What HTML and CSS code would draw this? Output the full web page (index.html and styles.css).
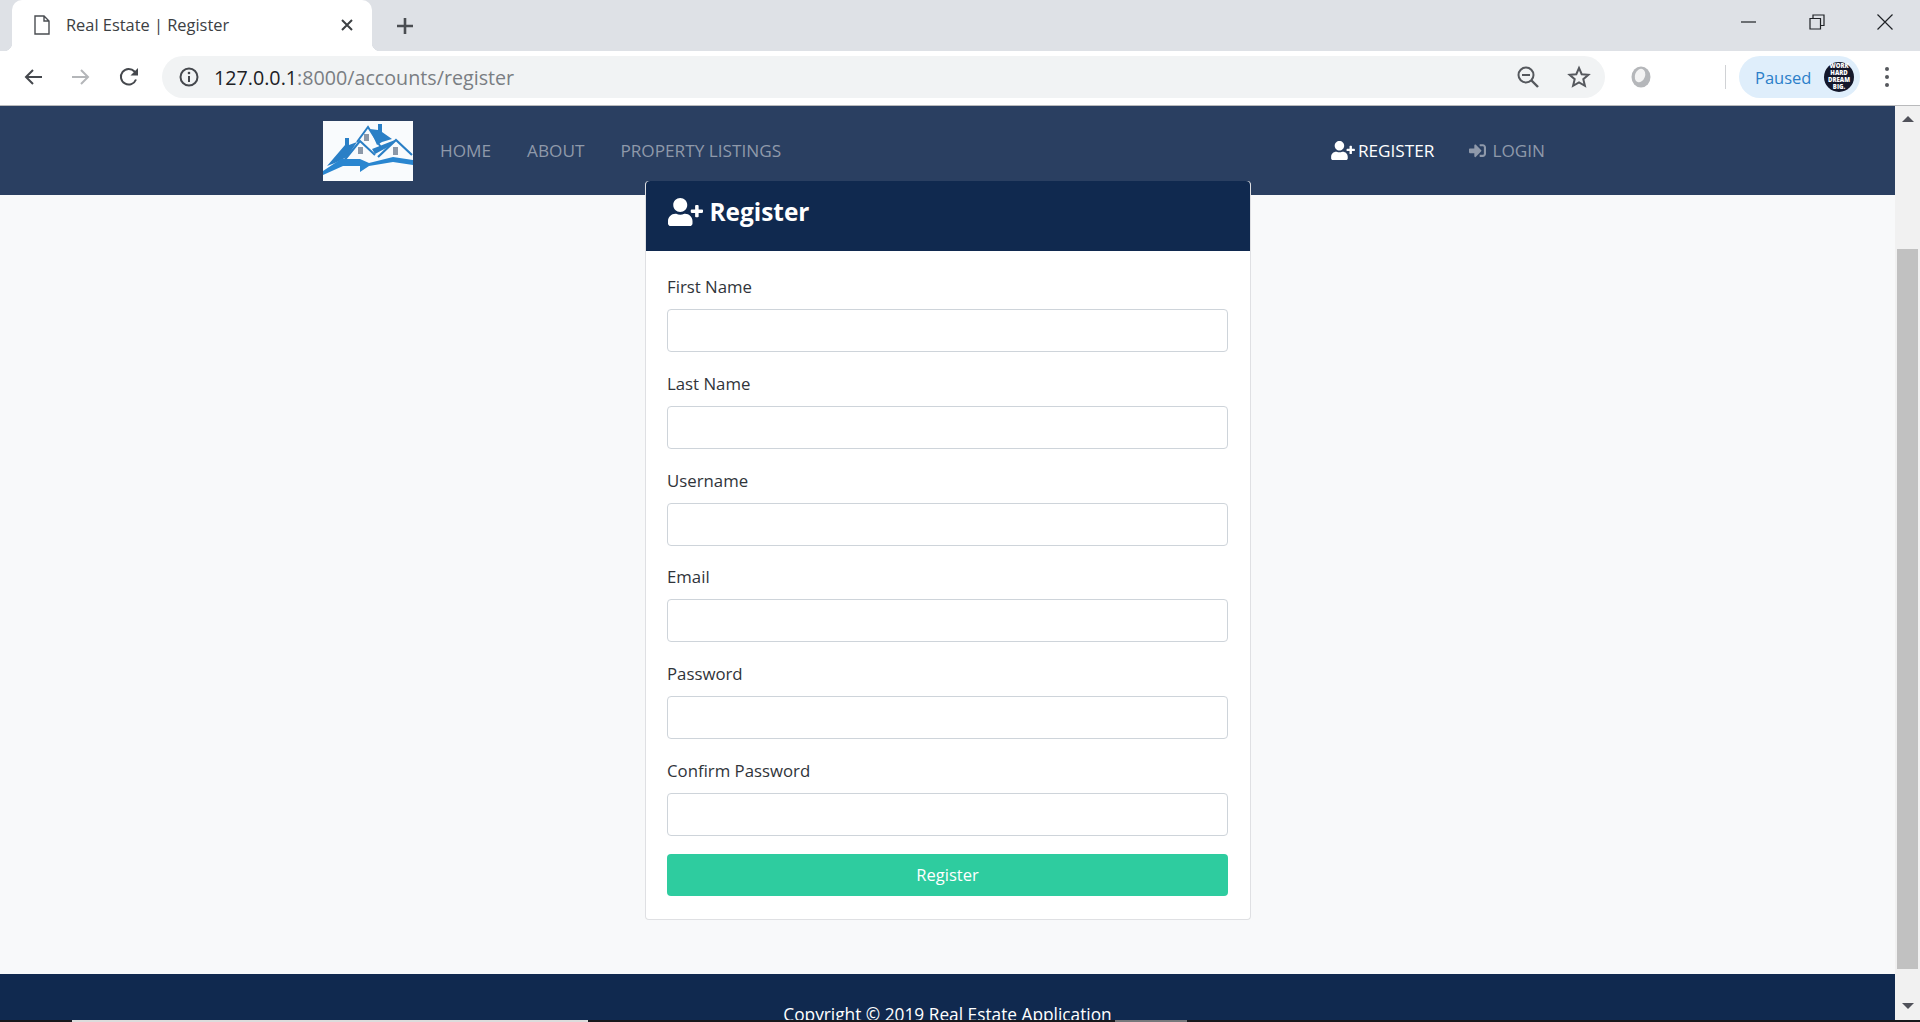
FILE: index.html
```html
<!DOCTYPE html>
<html lang="en">
<head>
  <meta charset="UTF-8" />
  <title>Real Estate | Register</title>
  <link rel="stylesheet" href="styles.css">
</head>
<body>
  <div class="tabstrip">
    <div class="tab">
      <svg class="tab-doc" width="16" height="20" viewBox="0 0 16 20"><path d="M1 1h9l5 5v13H1z M10 1v5h5" fill="none" stroke="#4a4d52" stroke-width="1.4"/></svg>
      <span class="tab-title">Real Estate | Register</span>
      <svg class="tab-close" width="14" height="14" viewBox="0 0 14 14"><path d="M2 2l10 10M12 2L2 12" stroke="#3c4043" stroke-width="2"/></svg>
    </div>
    <svg class="new-tab" width="20" height="20" viewBox="0 0 20 20"><path d="M10 2v16M2 10h16" stroke="#4a4d52" stroke-width="2.6"/></svg>
    <div class="win-controls">
      <svg width="16" height="16" viewBox="0 0 16 16"><path d="M0 8h15" stroke="#1f2226" stroke-width="1.2"/></svg>
      <svg width="16" height="16" viewBox="0 0 16 16"><path d="M1 4.500h10.500V15H1z M4 4.500V1h11v10.500h-3.500" fill="none" stroke="#1f2226" stroke-width="1.2"/></svg>
      <svg width="16" height="16" viewBox="0 0 16 16"><path d="M0.500 0.500l15 15M15.500 0.500l-15 15" stroke="#1f2226" stroke-width="1.2"/></svg>
    </div>
  </div>

  <div class="toolbar">
    <div class="tool-btn">
      <svg width="20" height="18" viewBox="0 0 20 18"><path d="M19 9H3M10 2L3 9l7 7" fill="none" stroke="#45484d" stroke-width="2"/></svg>
    </div>
    <div class="tool-btn">
      <svg width="20" height="18" viewBox="0 0 20 18"><path d="M1 9h16M10 2l7 7-7 7" fill="none" stroke="#b4b6b9" stroke-width="2"/></svg>
    </div>
    <div class="tool-btn">
      <svg width="22" height="22" viewBox="0 0 22 22"><path d="M18 13.500A7.800 7.800 0 1 1 16.500 5.500L19 8" fill="none" stroke="#45484d" stroke-width="2"/><path d="M20 2v7.500h-7.500z" fill="#45484d"/></svg>
    </div>
    <div class="omnibox">
      <svg width="22" height="22" viewBox="0 0 22 22"><circle cx="11" cy="11" r="8.500" fill="none" stroke="#45484d" stroke-width="2"/><path d="M11 10v6" stroke="#45484d" stroke-width="2"/><circle cx="11" cy="7" r="1.300" fill="#45484d"/></svg>
      <span class="url"><span class="url-host">127.0.0.1</span>:8000/accounts/register</span>
      <div class="omni-actions">
        <svg width="24" height="24" viewBox="0 0 24 24"><circle cx="10" cy="10" r="7.500" fill="none" stroke="#55585d" stroke-width="2"/><path d="M15.500 15.500L22 22" stroke="#55585d" stroke-width="2.400"/><path d="M6 10h8" stroke="#55585d" stroke-width="2"/></svg>
        <svg width="24" height="24" viewBox="0 0 24 24"><path d="M12 3l2.700 6.200 6.700.6-5.100 4.400 1.600 6.600L12 17.300l-5.900 3.500 1.600-6.600-5.100-4.400 6.700-.6z" fill="none" stroke="#55585d" stroke-width="2"/></svg>
      </div>
    </div>
    <svg class="ext-icon" width="24" height="24" viewBox="0 0 24 24"><ellipse cx="12" cy="12" rx="9.500" ry="10.500" fill="#b5b7ba"/><ellipse cx="11" cy="10.500" rx="5" ry="7" transform="rotate(20 11 10.500)" fill="#f3f3f3"/></svg>
    <div class="tool-sep"></div>
    <div class="paused-pill">
      <span class="paused-text">Paused</span>
      <div class="avatar"><span>WORK</span><span>HARD</span><span>DREAM</span><span>BIG.</span></div>
    </div>
    <div class="menu-dots"><i></i><i></i><i></i></div>
  </div>

  <div class="viewport">
    <div class="page">
      <nav class="navbar">
        <svg class="logo" width="90" height="60" viewBox="0 0 90 60">
          <rect width="90" height="60" fill="#f9fbfd"/>
          <path d="M4 45L22 24V17h4v7l8-3-10 15-12 6z" fill="#2a7fc6"/>
          <path d="M47 8l8 1V3h4v8l10 7-10 3-5 3z" fill="#2a7fc6"/>
          <path d="M49 28l23-9-7 7-13 7z" fill="#2a7fc6"/>
          <path d="M34 21L45 6l14 22" fill="none" stroke="#2a7fc6" stroke-width="2"/>
          <path d="M20 41L37 20l15 14" fill="none" stroke="#2a7fc6" stroke-width="2"/>
          <path d="M55 36l18-17 16 15" fill="none" stroke="#2a7fc6" stroke-width="2.200"/>
          <path d="M0 50L18 38H37l9 4 24-6 20 3v5l-20-3-24 4-9 6V45H20L0 54z" fill="#2a86d0"/>
          <path d="M41 13h5v7h-5zM35 26h5v7h-5zM70 26h5v8h-5z" fill="#8c98a8"/>
        </svg>
        <a class="nav-link nav-home">HOME</a>
        <a class="nav-link">ABOUT</a>
        <a class="nav-link">PROPERTY LISTINGS</a>
        <div class="nav-right">
          <a class="nav-link nav-active">
            <svg width="24" height="19" viewBox="0 0 640 512" fill="#fff"><path d="M624 208h-64v-64c0-8.800-7.200-16-16-16h-32c-8.800 0-16 7.200-16 16v64h-64c-8.800 0-16 7.200-16 16v32c0 8.800 7.200 16 16 16h64v64c0 8.800 7.200 16 16 16h32c8.800 0 16-7.200 16-16v-64h64c8.800 0 16-7.200 16-16v-32c0-8.800-7.200-16-16-16zm-400 48c70.700 0 128-57.300 128-128S294.700 0 224 0 96 57.300 96 128s57.300 128 128 128zm89.600 32h-16.700c-22.200 10.200-46.900 16-72.900 16s-50.600-5.800-72.900-16h-16.700C60.200 288 0 348.200 0 422.400V464c0 26.500 21.500 48 48 48h352c26.500 0 48-21.500 48-48v-41.600c0-74.200-60.200-134.400-134.400-134.400z"/></svg>
            REGISTER
          </a>
          <a class="nav-link">
            <svg width="19" height="17" viewBox="0 0 512 512" fill="#8f99aa"><path d="M416 448h-84c-6.600 0-12-5.400-12-12v-40c0-6.600 5.400-12 12-12h84c17.700 0 32-14.300 32-32V160c0-17.700-14.300-32-32-32h-84c-6.600 0-12-5.400-12-12V76c0-6.600 5.400-12 12-12h84c53 0 96 43 96 96v192c0 53-43 96-96 96zm-47-201L201 79c-15-15-41-4.500-41 17v96H24c-13.300 0-24 10.700-24 24v96c0 13.300 10.700 24 24 24h136v96c0 21.500 26 32 41 17l168-168c9.300-9.400 9.300-24.600 0-34z"/></svg>
            LOGIN
          </a>
        </div>
      </nav>

      <main class="card">
        <div class="card-header">
          <svg width="35" height="28" viewBox="0 0 640 512" fill="#fff"><path d="M624 208h-64v-64c0-8.800-7.200-16-16-16h-32c-8.800 0-16 7.200-16 16v64h-64c-8.800 0-16 7.200-16 16v32c0 8.800 7.200 16 16 16h64v64c0 8.800 7.200 16 16 16h32c8.800 0 16-7.200 16-16v-64h64c8.800 0 16-7.200 16-16v-32c0-8.800-7.200-16-16-16zm-400 48c70.700 0 128-57.300 128-128S294.700 0 224 0 96 57.300 96 128s57.300 128 128 128zm89.600 32h-16.700c-22.200 10.200-46.900 16-72.900 16s-50.600-5.800-72.900-16h-16.700C60.200 288 0 348.200 0 422.400V464c0 26.500 21.500 48 48 48h352c26.500 0 48-21.500 48-48v-41.600c0-74.200-60.200-134.400-134.400-134.400z"/></svg>
          <h4>Register</h4>
        </div>
        <form class="card-body">
          <div class="form-group"><label>First Name</label><input type="text"></div>
          <div class="form-group"><label>Last Name</label><input type="text"></div>
          <div class="form-group"><label>Username</label><input type="text"></div>
          <div class="form-group"><label>Email</label><input type="email"></div>
          <div class="form-group"><label>Password</label><input type="password"></div>
          <div class="form-group"><label>Confirm Password</label><input type="password"></div>
          <button type="button" class="btn-register">Register</button>
        </form>
      </main>

      <footer class="footer">Copyright © 2019 Real Estate Application</footer>
    </div>

    <div class="scrollbar">
      <div class="scroll-btn"><span class="arrow-up"></span></div>
      <div class="scroll-thumb"></div>
      <div class="scroll-btn scroll-btn-down"><span class="arrow-down"></span></div>
    </div>
  </div>

  <div class="taskbar-edge">
    <div class="edge-light"></div>
    <div class="edge-grey"></div>
  </div>
</body>
</html>
```

FILE: styles.css
```css
* {
  box-sizing: border-box;
}
html, body {
  height: 100%;
}
body {
  font-family: "Open Sans", "Noto Sans", Arial, sans-serif;
  display: flex;
  flex-direction: column;
  margin: 0;
  overflow: hidden;
  background-color: #f8f9fa;
  color: #212529;
}

/* browser chrome */
.tabstrip {
  display: flex;
  align-items: center;
  flex: 0 0 51px;
  padding-left: 12px;
  background-color: #dee1e6;
}
.tab {
  position: relative;
  display: flex;
  align-items: center;
  align-self: stretch;
  width: 360px;
  padding: 0 18px 1px 22px;
  background-color: #fff;
  border-radius: 10px 10px 0 0;
}
.tab::before,
.tab::after {
  content: "";
  position: absolute;
  bottom: 0;
  width: 8px;
  height: 8px;
}
.tab::before {
  left: -8px;
  background: radial-gradient(circle at 0 0, transparent 8px, #fff 8.5px);
}
.tab::after {
  right: -8px;
  background: radial-gradient(circle at 100% 0, transparent 8px, #fff 8.5px);
}
.tab-title {
  margin-left: 16px;
  padding-bottom: 2px;
  font-size: 16.4px;
  color: #3c4043;
  white-space: nowrap;
}
.tab-close {
  margin-left: auto;
}
.new-tab {
  margin-left: 23px;
}
.win-controls {
  display: flex;
  gap: 52px;
  margin-left: auto;
  padding: 0 27px 7px 0;
}
.toolbar {
  display: flex;
  align-items: center;
  flex: 0 0 55px;
  padding: 0 0 2px 9px;
  background-color: #fff;
  border-bottom: 1px solid #b9babc;
}
.tool-btn {
  display: flex;
  justify-content: center;
  align-items: center;
  width: 48px;
}
.omnibox {
  display: flex;
  align-items: center;
  width: 1443px;
  height: 42px;
  margin-left: 9px;
  padding: 0 14px 0 16px;
  background-color: #f1f3f4;
  border-radius: 21px;
}
.url {
  margin-left: 14px;
  font-size: 19.7px;
  color: #7a7e83;
  white-space: nowrap;
}
.url-host {
  color: #202124;
}
.omni-actions {
  display: flex;
  gap: 27px;
  margin-left: auto;
}
.ext-icon {
  margin-left: 24px;
}
.tool-sep {
  width: 1px;
  height: 24px;
  margin-left: 72px;
  background-color: #d0d2d5;
}
.paused-pill {
  display: flex;
  align-items: center;
  justify-content: space-between;
  width: 121px;
  height: 42px;
  margin-left: 13px;
  padding: 0 6px 0 16px;
  background-color: #dfeefb;
  border-radius: 21px;
}
.paused-text {
  font-size: 16.5px;
  color: #2b7fc9;
}
.avatar {
  display: flex;
  flex-direction: column;
  align-items: center;
  justify-content: center;
  width: 30px;
  height: 30px;
  border-radius: 50%;
  background-color: #14182b;
  color: #fff;
  font-size: 6px;
  font-weight: 800;
  line-height: 7px;
}
.menu-dots {
  display: flex;
  flex-direction: column;
  gap: 4px;
  margin-left: 25px;
}
.menu-dots i {
  width: 4px;
  height: 4px;
  border-radius: 50%;
  background-color: #55585d;
}

/* page area */
.viewport {
  display: flex;
  flex: 1;
  min-height: 0;
}
.page {
  flex: 1;
  min-width: 0;
  overflow: hidden;
  background-color: #f8f9fa;
}
.navbar {
  display: flex;
  align-items: center;
  height: 89px;
  padding: 0 350px 0 323px;
  background-color: #2a3f61;
}
.logo {
  flex: none;
}
.nav-link {
  display: flex;
  align-items: center;
  gap: 5px;
  margin-left: 36px;
  font-size: 17.2px;
  color: #8f99aa;
  white-space: nowrap;
}
.nav-home {
  margin-left: 27px;
}
.nav-right {
  display: flex;
  margin-left: auto;
}
.nav-right .nav-link {
  margin-left: 34px;
}
.nav-active {
  gap: 3px;
  color: #fff;
}
.card {
  width: 606px;
  margin: -14px auto 54px;
  background-color: #fff;
  border: 1px solid #dfe0e3;
  border-top: none;
  border-radius: 4px;
}
.card-header {
  display: flex;
  align-items: center;
  gap: 7px;
  height: 70px;
  padding: 0 22px 9px;
  background-color: #10294f;
  color: #fff;
  border-radius: 4px 4px 0 0;
}
.card-header h4 {
  margin: 0;
  font-size: 24.4px;
  font-weight: 700;
}
.card-body {
  padding: 20px 21.5px 23px;
}
.form-group {
  margin-bottom: 15.8px;
}
.form-group:last-of-type {
  margin-bottom: 18px;
}
.form-group label {
  display: block;
  margin-bottom: 8px;
  font-size: 16.8px;
  line-height: 31px;
  height: 30px;
  color: #30343a;
}
.form-group input {
  display: block;
  width: 100%;
  height: 43px;
  background-color: #fff;
  border: 1px solid #ced4da;
  border-radius: 4px;
}
.btn-register {
  display: block;
  width: 100%;
  height: 42px;
  font-family: inherit;
  font-size: 16.5px;
  color: #fff;
  background-color: #2ecc9f;
  border: none;
  border-radius: 4px;
}
.footer {
  height: 100px;
  padding-top: 28px;
  text-align: center;
  font-size: 17.3px;
  line-height: 26px;
  color: #fff;
  background-color: #10294f;
}

/* scrollbar */
.scrollbar {
  display: flex;
  flex-direction: column;
  flex: 0 0 25px;
  background-color: #f1f1f1;
}
.scroll-btn {
  display: flex;
  justify-content: center;
  align-items: center;
  flex: 0 0 26px;
}
.scroll-btn-down {
  flex: 1;
  align-items: flex-end;
  padding-bottom: 11px;
}
.arrow-up,
.arrow-down {
  width: 0;
  height: 0;
  border-left: 6px solid transparent;
  border-right: 6px solid transparent;
}
.arrow-up {
  border-bottom: 6px solid #50525a;
}
.arrow-down {
  border-top: 6px solid #50525a;
}
.scroll-thumb {
  flex: 0 0 720px;
  margin: 117px 2px 0;
  background-color: #c1c1c1;
}

/* sliver of the desktop below the window */
.taskbar-edge {
  display: flex;
  flex: 0 0 2px;
  padding-left: 72px;
  background-color: #16181c;
}
.edge-light {
  width: 516px;
  background-color: #dcdcdc;
}
.edge-grey {
  width: 72px;
  margin-left: 527px;
  background-color: #77797c;
}
```
